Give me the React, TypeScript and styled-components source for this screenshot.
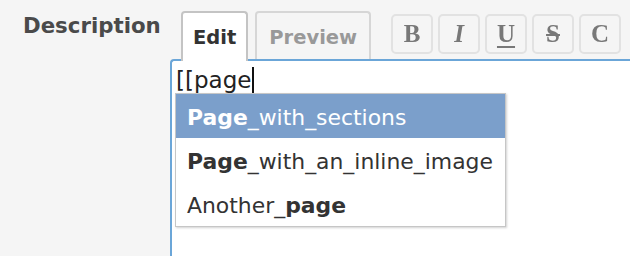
import React from 'react';
import styled, { createGlobalStyle } from 'styled-components';

const GlobalStyle = createGlobalStyle`
  html, body {
    margin: 0;
    padding: 0;
    background: #f5f5f5;
    overflow: hidden;
  }
  body {
    font-family: "DejaVu Sans", Verdana, sans-serif;
  }
`;

const Page = styled.div`
  display: grid;
  grid-template-columns: 170px 1fr;
  width: 630px;
  height: 256px;
`;

const Label = styled.div`
  padding: 13px 0 0 23px;
  font-size: 21.3px;
  font-weight: bold;
  color: #4a4a4a;
`;

const Column = styled.div`
  display: flex;
  flex-direction: column;
  min-width: 0;
`;

const TopBar = styled.div`
  display: flex;
  align-items: flex-end;
  height: 59px;
  padding: 0 9px 0 11px;
`;

const Tabs = styled.div`
  display: flex;
  align-items: flex-end;
  gap: 7px;
`;

const Tab = styled.div<{ $active?: boolean }>`
  position: relative;
  z-index: 2;
  box-sizing: border-box;
  height: ${p => (p.$active ? '50px' : '48px')};
  margin-bottom: ${p => (p.$active ? '-2px' : '0')};
  padding: 0 ${p => (p.$active ? '10px' : '12px')};
  display: flex;
  align-items: center;
  padding-top: ${p => (p.$active ? '0' : '2px')};
  border: 2px solid ${p => (p.$active ? '#c4c4c4' : '#d6d6d6')};
  border-bottom: none;
  border-radius: 4px 4px 0 0;
  background: ${p => (p.$active ? '#fff' : '#f5f5f5')};
  color: ${p => (p.$active ? '#333' : '#999')};
  font-size: 19.5px;
  font-weight: bold;
`;

const Toolbar = styled.div`
  margin-left: auto;
  align-self: flex-start;
  margin-top: 14px;
  display: flex;
  gap: 5px;
`;

const ToolButton = styled.div`
  box-sizing: border-box;
  width: 42px;
  height: 40px;
  border: 2px solid #e2e2e2;
  border-radius: 5px;
  display: flex;
  align-items: center;
  justify-content: center;
  font-family: "Liberation Serif", "DejaVu Serif", serif;
  font-weight: bold;
  font-size: 25px;
  color: #787878;
  filter: blur(0.5px);
`;

const Glyph = styled.span<{ $italic?: boolean; $underline?: boolean; $strike?: boolean }>`
  font-style: ${p => (p.$italic ? 'italic' : 'normal')};
  text-decoration: ${p =>
    p.$underline ? 'underline' : p.$strike ? 'line-through' : 'none'};
  text-decoration-thickness: 2px;
  text-underline-offset: 4px;
`;

const Editor = styled.div`
  position: relative;
  flex: 1;
  margin-right: -20px;
  margin-bottom: -20px;
  background: #fff;
  border-top: 2px solid #6ba6d8;
  border-left: 2px solid #6ba6d8;
  border-top-left-radius: 4px;
  padding: 5px 0 0 4px;
`;

const Typed = styled.div`
  font-size: 23px;
  color: #222;
  line-height: 28px;
`;

const Caret = styled.span`
  display: inline-block;
  width: 2px;
  height: 27px;
  margin-left: 1px;
  vertical-align: -6px;
  background: #111;
`;

const Suggestions = styled.ul`
  position: absolute;
  left: 3px;
  top: 32px;
  width: 331px;
  box-sizing: border-box;
  margin: 0;
  padding: 0;
  list-style: none;
  background: #fff;
  border: 1px solid #c6c6c6;
  box-shadow: 1px 1px 2px rgba(0, 0, 0, 0.18);
  z-index: 3;
`;

const Suggestion = styled.li<{ $selected?: boolean }>`
  height: 44px;
  padding: 2px 0 0 11px;
  box-sizing: border-box;
  display: flex;
  align-items: center;
  font-size: 21.9px;
  color: ${p => (p.$selected ? '#fff' : '#333')};
  background: ${p => (p.$selected ? '#7b9fcb' : 'transparent')};
  white-space: nowrap;

  b {
    font-weight: bold;
  }
`;

export default function App() {
  return (
    <>
      <GlobalStyle />
      <Page>
        <Label>Description</Label>
        <Column>
          <TopBar>
            <Tabs>
              <Tab $active>Edit</Tab>
              <Tab>Preview</Tab>
            </Tabs>
            <Toolbar>
              <ToolButton><Glyph>B</Glyph></ToolButton>
              <ToolButton><Glyph $italic>I</Glyph></ToolButton>
              <ToolButton><Glyph $underline>U</Glyph></ToolButton>
              <ToolButton><Glyph $strike>S</Glyph></ToolButton>
              <ToolButton><Glyph>C</Glyph></ToolButton>
            </Toolbar>
          </TopBar>
          <Editor>
            <Typed>
              [[page<Caret />
            </Typed>
            <Suggestions>
              <Suggestion $selected><b>Page</b>_with_sections</Suggestion>
              <Suggestion><b>Page</b>_with_an_inline_image</Suggestion>
              <Suggestion>Another_<b>page</b></Suggestion>
            </Suggestions>
          </Editor>
        </Column>
      </Page>
    </>
  );
}
